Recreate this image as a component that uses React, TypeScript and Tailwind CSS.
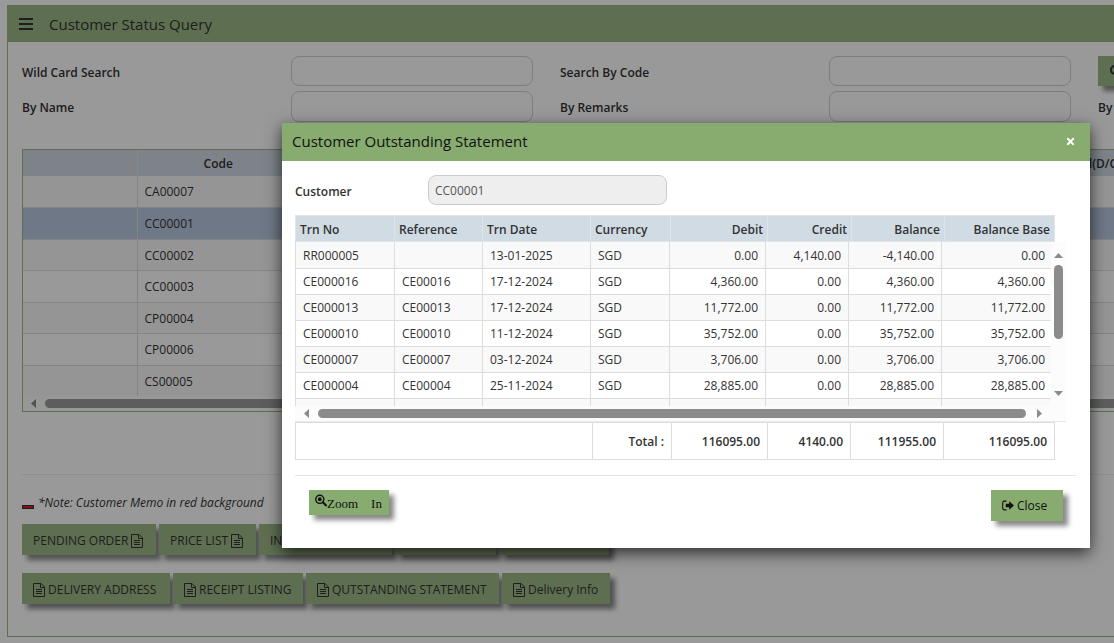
import React from 'react';
import { FaSearch, FaTimes } from 'react-icons/fa';
import clsx from 'clsx';

const customers = ['CA00007', 'CC00001', 'CC00002', 'CC00003', 'CP00004', 'CP00006', 'CS00005'];

const columns = ['Trn No', 'Reference', 'Trn Date', 'Currency', 'Debit', 'Credit', 'Balance', 'Balance Base'];

const transactions = [
  ['RR000005', '', '13-01-2025', 'SGD', '0.00', '4,140.00', '-4,140.00', '0.00'],
  ['CE000016', 'CE00016', '17-12-2024', 'SGD', '4,360.00', '0.00', '4,360.00', '4,360.00'],
  ['CE000013', 'CE00013', '17-12-2024', 'SGD', '11,772.00', '0.00', '11,772.00', '11,772.00'],
  ['CE000010', 'CE00010', '11-12-2024', 'SGD', '35,752.00', '0.00', '35,752.00', '35,752.00'],
  ['CE000007', 'CE00007', '03-12-2024', 'SGD', '3,706.00', '0.00', '3,706.00', '3,706.00'],
  ['CE000004', 'CE00004', '25-11-2024', 'SGD', '28,885.00', '0.00', '28,885.00', '28,885.00'],
  ['', '', '', '', '', '', '', ''],
];

const FileIcon = () => (
  <svg viewBox="0 0 12 14" className="h-3.5 w-3 shrink-0" fill="none" stroke="currentColor" aria-hidden="true">
    <path d="M.5.5h7.5l3.5 3.5v9.5H.5zM7.5.5v4h4" />
    <path d="M3 6.5h6M3 8.5h6M3 10.5h6" />
  </svg>
);

const ZoomIcon = () => (
  <svg viewBox="0 0 13 13" className="mb-1 h-[13px] w-3 shrink-0" fill="none" stroke="currentColor" aria-hidden="true">
    <circle cx="5.2" cy="5.2" r="4.4" strokeWidth="1.5" />
    <circle cx="5.2" cy="5.2" r="2.1" fill="currentColor" stroke="none" />
    <path d="M8.5 8.5l3.5 3.3" strokeWidth="2.2" strokeLinecap="round" />
  </svg>
);

const SignOutIcon = () => (
  <svg viewBox="0 0 12 11" className="h-[11px] w-3 shrink-0" fill="none" aria-hidden="true">
    <path d="M4.5 1.1H2.3Q.7 1.1.7 2.7v5.6Q.7 9.9 2.3 9.9h2.2" stroke="currentColor" strokeWidth="1.1" />
    <path d="M3.8 3.7h3.4V1.3L12 5.5 7.2 9.7V7.3H3.8z" fill="currentColor" />
  </svg>
);

interface ArrowProps {
  points: string;
  className?: string;
}

const Arrow: React.FC<ArrowProps> = ({ points, className }) => (
  <svg viewBox="0 0 10 10" className={clsx('h-2.5 w-2.5 shrink-0', className)} fill="currentColor" aria-hidden="true">
    <polygon points={points} />
  </svg>
);

interface FieldProps {
  id: string;
  label: string;
}

const Field: React.FC<FieldProps> = ({ id, label }) => (
  <>
    <label htmlFor={id} className="self-center pt-[3px] font-semibold">
      {label}
    </label>
    <input id={id} type="text" className="mr-[27px] rounded-lg border border-[#d0d0d0] bg-transparent px-2" />
  </>
);

interface ActionButtonProps {
  label?: string;
  iconAfter?: boolean;
  className?: string;
}

const ActionButton: React.FC<ActionButtonProps> = ({ label, iconAfter, className }) => (
  <button
    type="button"
    className={clsx(
      'flex h-[31px] shrink-0 items-center gap-[3px] bg-[#9db987] pt-0.5 pl-[11px] whitespace-nowrap shadow-[5px_5px_5px_#888]',
      className,
    )}
  >
    {!iconAfter && <FileIcon />}
    {label}
    {iconAfter && <FileIcon />}
  </button>
);

const CustomerTable = () => (
  <div className="mt-[27px] border-y border-l border-[#9db987]">
    <table className="w-full table-fixed border-collapse">
      <colgroup>
        <col className="w-[114px]" />
        <col className="w-[162px]" />
        <col />
        <col className="w-[550px]" />
      </colgroup>
      <thead>
        <tr className="h-[26px] bg-[#d0dbe4]">
          <th className="border-r border-[#dfe4e8] pr-1">
            <svg viewBox="0 0 6 12" className="ml-auto h-3 w-1.5" fill="#dadada" aria-hidden="true">
              <path d="M3 0l3 5H0zM3 12l3-5H0z" />
            </svg>
          </th>
          <th className="pt-0.5 font-semibold">Code</th>
          <th />
          <th className="pt-0.5 pl-2 text-left font-semibold">Hold(D/C)</th>
        </tr>
      </thead>
      <tbody>
        {customers.map((code, index) => (
          <tr
            key={code}
            className={clsx(
              'border-b border-[#dddddd] odd:h-[31px] even:h-8 last:border-b-0',
              index === 1 ? 'bg-[#bac8e0]' : index % 2 === 0 && 'bg-[#f9f9f9]',
            )}
          >
            <td className="border-r border-[#dddddd]" />
            <td className="pt-0.5 pl-[7px]">{code}</td>
            <td />
            <td />
          </tr>
        ))}
      </tbody>
    </table>
    <div className="flex h-[15px] items-center bg-[#fcfcfc] pl-[5px] text-[#8b8b8b]">
      <Arrow points="8,0 8,9 3,4.5" />
      <div className="ml-[7px] h-[9px] flex-1 rounded-full bg-[#9b9b9b]" />
    </div>
  </div>
);

const StatusPage = () => (
  <main className="w-[1614px] min-w-full border-b border-l border-[#9db987]">
    <header className="flex h-[37px] items-center bg-[#9db987] pl-[11px]">
      <button type="button" aria-label="Menu" className="flex w-3.5 flex-col gap-[3px]">
        <span className="h-[2px] bg-[#333]" />
        <span className="h-[2px] bg-[#333]" />
        <span className="h-[2px] bg-[#333]" />
      </button>
      <h1 className="ml-4 text-[15px]">Customer Status Query</h1>
    </header>

    <div className="px-3.5 pt-3.5 pb-8">
      <form className="grid grid-cols-[repeat(5,269px)] grid-rows-[30px_31px] gap-y-[5px]">
        <Field id="wild" label="Wild Card Search" />
        <Field id="code" label="Search By Code" />
        <button
          type="button"
          aria-label="Search"
          className="flex w-20 items-center bg-[#9db987] pl-3 shadow-[5px_5px_5px_#888]"
        >
          <FaSearch className="h-3 w-3" />
        </button>
        <Field id="name" label="By Name" />
        <Field id="remarks" label="By Remarks" />
        <span className="self-center pt-[3px] font-semibold">By</span>
      </form>

      <CustomerTable />

      <hr className="mt-[62px] border-[#eeeeee]" />

      <p className="mt-[18px] flex h-5 items-center gap-1 italic">
        <span className="mt-2 h-1 w-3 border border-[#333] bg-[#e02020]" />
        *Note: Customer Memo in red background
      </p>

      <div className="mt-[11px] flex gap-[3px]">
        <ActionButton label="PENDING ORDER" iconAfter className="w-[134px]" />
        <ActionButton label="PRICE LIST" iconAfter className="w-[97px]" />
        <ActionButton label="IN" iconAfter className="w-[133px]" />
        <ActionButton iconAfter className="w-[101px]" />
        <ActionButton iconAfter className="w-[110px]" />
      </div>
      <div className="mt-[18px] flex gap-[3px]">
        <ActionButton label="DELIVERY ADDRESS" className="w-[148px]" />
        <ActionButton label="RECEIPT LISTING" className="w-[130px]" />
        <ActionButton label="QUTSTANDING STATEMENT" className="w-[193px]" />
        <ActionButton label="Delivery Info" className="w-[108px]" />
      </div>
    </div>
  </main>
);

const StatementTable = () => (
  <div className="mt-2.5">
    <div className="pr-[11px]">
      <table className="w-full table-fixed border-collapse border border-[#dfe4e8]">
        <colgroup>
          <col className="w-[99px]" />
          <col className="w-[88px]" />
          <col className="w-[108px]" />
          <col className="w-[80px]" />
          <col className="w-[97px]" />
          <col className="w-[84px]" />
          <col className="w-[93px]" />
          <col />
        </colgroup>
        <thead>
          <tr className="h-[26px] bg-[#d0dbe4] text-[#333]">
            {columns.map((column, index) => (
              <th
                key={column}
                className={clsx(
                  'border-r border-[#dfe4e8] px-1 pt-0.5 font-semibold whitespace-nowrap',
                  index > 3 ? 'text-right' : 'text-left',
                )}
              >
                {column}
              </th>
            ))}
          </tr>
        </thead>
      </table>
    </div>

    <div className="flex h-[164px]">
      <div className="min-w-0 flex-1 overflow-hidden">
        <table className="w-full table-fixed border-collapse border-l border-[#dddddd]">
          <colgroup>
            <col className="w-[99px]" />
            <col className="w-[88px]" />
            <col className="w-[108px]" />
            <col className="w-[79px]" />
            <col className="w-[96px]" />
            <col className="w-[83px]" />
            <col className="w-[93px]" />
            <col />
          </colgroup>
          <tbody>
            {transactions.map((row, rowIndex) => (
              <tr key={rowIndex} className="h-[26px] border-b border-[#dddddd] odd:bg-[#f9f9f9]">
                {row.map((cell, index) => (
                  <td
                    key={index}
                    className={clsx(
                      'border-r border-[#dddddd] pt-0.5 whitespace-nowrap last:border-r-0 last:pr-1.5',
                      index > 3 ? 'pr-[7px] text-right' : 'pl-[7px]',
                    )}
                  >
                    {cell}
                  </td>
                ))}
              </tr>
            ))}
          </tbody>
        </table>
      </div>
      <div className="flex w-[15px] flex-col items-center bg-[#fcfcfc] pt-2 text-[#8b8b8b]">
        <Arrow points="0,8 9,8 4.5,3" />
        <div className="mt-[5px] h-[74px] w-[9px] rounded-full bg-[#8b8b8b]" />
        <Arrow points="0,3 9,3 4.5,8" className="mt-auto mb-2" />
      </div>
    </div>
    <div className="flex h-4 items-center border-b border-[#e6ebf0] bg-[#fcfcfc] pr-[21px] pl-[6px] text-[#8b8b8b]">
      <Arrow points="8,0 8,9 3,4.5" />
      <div className="mr-[9px] ml-[7px] h-[9px] flex-1 rounded-full bg-[#8b8b8b]" />
      <Arrow points="2,0 2,9 7,4.5" />
    </div>

    <div className="pr-[11px]">
      <table className="w-full table-fixed border-collapse border border-[#dddddd]">
        <colgroup>
          <col className="w-[297px]" />
          <col className="w-[79px]" />
          <col className="w-[96px]" />
          <col className="w-[83px]" />
          <col className="w-[93px]" />
          <col />
        </colgroup>
        <tbody>
          <tr className="h-[37px]">
            {['', 'Total :', '116095.00', '4140.00', '111955.00', '116095.00'].map((total, index) => (
              <td
                key={index}
                className="border-r border-[#dddddd] pt-0.5 pr-[7px] text-right font-semibold whitespace-nowrap"
              >
                {total}
              </td>
            ))}
          </tr>
        </tbody>
      </table>
    </div>
  </div>
);

const StatementModal = () => (
  <section
    role="dialog"
    aria-labelledby="statement-title"
    className="min-w-0 flex-1 bg-white pb-[27px] shadow-[0_5px_15px_rgba(0,0,0,0.7)]"
  >
    <header className="flex h-[38px] items-center justify-between bg-[#88ab6f] pr-3.5 pb-0.5 pl-2.5 text-[#111]">
      <h2 id="statement-title" className="text-[15px]">
        Customer Outstanding Statement
      </h2>
      <button type="button" aria-label="Close" className="text-white">
        <FaTimes className="h-[11px] w-[11px]" />
      </button>
    </header>

    <div className="pt-3.5 pr-3.5 pl-[13px]">
      <div className="flex items-center">
        <label htmlFor="customer" className="w-[133px] pt-[3px] font-semibold">
          Customer
        </label>
        <input
          id="customer"
          type="text"
          readOnly
          defaultValue="CC00001"
          className="h-[30px] w-[239px] rounded-lg border border-[#cccccc] bg-[#eeeeee] px-1.5 text-[#555]"
        />
      </div>

      <div className="pr-2.5">
        <StatementTable />
      </div>

      <hr className="mt-[15px] border-[#e5e5e5]" />

      <div className="flex items-start justify-between pt-3.5 pr-[13px] pl-3.5">
        <button
          type="button"
          className="flex h-[25px] w-20 items-center bg-[#88ab6f] pl-1.5 font-['Liberation_Serif',serif] text-[13px] text-[#111] shadow-[5px_5px_5px_#888]"
        >
          <ZoomIcon />
          <span className="pt-0.5 whitespace-pre">Zoom{'    '}In</span>
        </button>
        <button
          type="button"
          className="flex h-[31px] w-[72px] items-center gap-[3px] bg-[#88ab6f] pl-[11px] text-[#111] shadow-[5px_5px_5px_#888]"
        >
          <SignOutIcon />
          Close
        </button>
      </div>
    </div>
  </section>
);

export default function App() {
  return (
    <div className="relative min-h-screen overflow-hidden bg-white pt-[5px] pl-[7px] font-['Open_Sans','Noto_Sans',sans-serif] text-xs text-[#333]">
      <StatusPage />
      <div className="absolute inset-0 flex items-start bg-black/40 pt-[123px] pr-6 pl-[282px]">
        <StatementModal />
      </div>
    </div>
  );
}
